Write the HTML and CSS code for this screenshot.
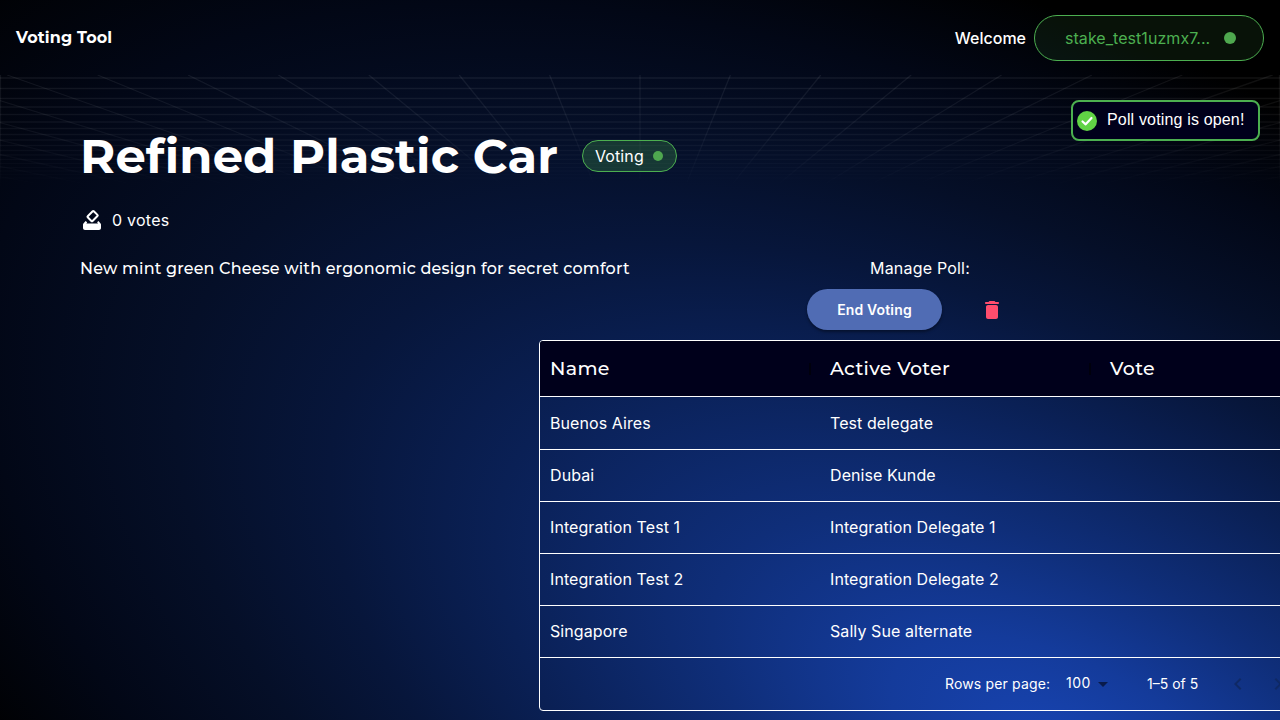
FILE: index.html
```html
<!DOCTYPE html>
<html lang="en">
<head>
<meta charset="utf-8">
<title>Voting Tool</title>
<link rel="stylesheet" href="styles.css">
</head>
<body>
<svg class="backdrop" viewBox="0 0 1280 720" aria-hidden="true">
  <defs>
    <radialGradient id="glow" gradientUnits="userSpaceOnUse" cx="0" cy="0" r="1" gradientTransform="translate(1070 760) rotate(28) scale(1400 680)">
      <stop offset="0" stop-color="#1845b4"/>
      <stop offset=".14" stop-color="#143b9b"/>
      <stop offset=".28" stop-color="#0f2e79"/>
      <stop offset=".45" stop-color="#0a2055"/>
      <stop offset=".58" stop-color="#07163b"/>
      <stop offset=".7" stop-color="#050f28"/>
      <stop offset=".85" stop-color="#020716"/>
      <stop offset="1" stop-color="#000"/>
    </radialGradient>
    <linearGradient id="fade" x1="0" y1="75" x2="0" y2="190" gradientUnits="userSpaceOnUse">
      <stop offset="0" stop-color="#fff"/><stop offset=".5" stop-color="#fff" stop-opacity=".7"/><stop offset="1" stop-color="#fff" stop-opacity="0"/>
    </linearGradient>
    <mask id="gridMask" maskUnits="userSpaceOnUse" x="0" y="75" width="1280" height="120"><rect y="75" width="1280" height="120" fill="url(#fade)"/></mask>
  </defs>
  <rect width="1280" height="720" fill="url(#glow)"/>
  <g id="grid" mask="url(#gridMask)" stroke="#fff" stroke-opacity=".07" stroke-width="1.3"></g>
</svg>
<header class="topbar">
  <div class="brand">Voting Tool</div>
  <div class="user"><span class="welcome">Welcome</span>
    <button class="wallet"><span>stake_test1uzmx7...</span><i class="dot"></i></button>
  </div>
</header>
<main class="page">
  <div class="heading"><h1>Refined Plastic Car</h1><span class="chip">Voting<i class="dot"></i></span></div>
  <div class="votes">
    <svg width="24" height="24" viewBox="0 0 24 24" fill="#fff"><rect x="8.300" y="4.700" width="8.600" height="6.800" rx=".8" transform="rotate(-45 12.600 8.100)" fill="none" stroke="#fff" stroke-width="2"/><path d="M5.600 13 3.600 15.200c-.4.400-.6.900-.6 1.400V20c0 1.100.9 2 2 2h14c1.100 0 2-.9 2-2v-3.400c0-.5-.2-1-.6-1.400l-2-2.200-1.300 1.300.9 1.200H6.400l.8-1.200z"/></svg>
    <span>0 votes</span>
  </div>
  <div class="columns">
    <p class="description">New mint green Cheese with ergonomic design for secret comfort</p>
    <section class="manage">
      <div class="manage-label">Manage Poll:</div>
      <div class="actions">
        <button class="end">End Voting</button>
        <svg width="24" height="24" viewBox="0 0 24 24" fill="#ff4d6d"><path d="M6 19c0 1.100.9 2 2 2h8c1.100 0 2-.9 2-2V9c0-1.100-.9-2-2-2H8c-1.100 0-2 .9-2 2v10zM18 4h-2.500l-.71-.71c-.18-.18-.44-.29-.7-.29H9.910c-.26 0-.52.11-.7.29L8.500 4H6c-.55 0-1 .45-1 1s.45 1 1 1h12c.55 0 1-.45 1-1s-.45-1-1-1z"/></svg>
      </div>
      <div class="table">
        <div class="row head"><div>Name<i class="sep"></i></div><div>Active Voter<i class="sep"></i></div><div>Vote</div></div>
        <div class="row first"><div>Buenos Aires</div><div>Test delegate</div></div>
        <div class="row"><div>Dubai</div><div>Denise Kunde</div></div>
        <div class="row"><div>Integration Test 1</div><div>Integration Delegate 1</div></div>
        <div class="row"><div>Integration Test 2</div><div>Integration Delegate 2</div></div>
        <div class="row"><div>Singapore</div><div>Sally Sue alternate</div></div>
        <div class="footer">
          <span class="rpp">Rows per page:</span><span class="size">100</span>
          <svg class="caret" width="24" height="24" viewBox="0 0 24 24"><path d="m7 10 5 5 5-5z"/></svg>
          <span class="range">1–5 of 5</span>
          <svg class="prev" width="24" height="24" viewBox="0 0 24 24"><path d="M15.410 16.590 10.830 12l4.580-4.590L14 6l-6 6 6 6z"/></svg>
          <svg class="next" width="24" height="24" viewBox="0 0 24 24"><path d="M8.590 16.590 13.170 12 8.590 7.410 10 6l6 6-6 6z"/></svg>
        </div>
      </div>
    </section>
  </div>
</main>
<div class="toast" role="status">
  <svg width="20" height="20" viewBox="0 0 20 20"><circle cx="10" cy="10" r="10" fill="#61d345"/><path d="M5.500 10.500 8.700 13.300 14.500 7" fill="none" stroke="#fff" stroke-width="2.200" stroke-linecap="round" stroke-linejoin="round"/></svg>
  <span>Poll voting is open!</span>
</div>
<script src="grid.js"></script>
</body>
</html>
```
FILE: grid.js
```js
const grid = document.getElementById('grid');
const line = (x1, y1, x2, y2) => {
  const el = document.createElementNS('http://www.w3.org/2000/svg', 'line');
  Object.entries({ x1, y1, x2, y2 }).forEach(([k, v]) => el.setAttribute(k, v));
  grid.append(el);
};
[78, 88.5, 98.500, 107, 114.500, 122, 128.500, 134.500, 140, 145.500, 150.500, 155, 159.500, 163.500, 167.500, 171, 174.500, 178].forEach(y => line(0, y, 1280, y));
/* Rays fan out on both sides of the centre line */
for (let i = -16; i <= 16; i++) line(640 + i * 90.4, 75, 640 + i * 45, 187);
line(0.500, 75, 0.500, 187);
line(1279.500, 75, 1279.500, 187);
```
FILE: styles.css
```css
* { box-sizing: border-box; }
body { margin: 0; width: 1280px; height: 720px; overflow: hidden; position: relative; background: #000; color: #fff; font: 400 16px/24px Inter, sans-serif; letter-spacing: .1px; }
button { font: inherit; color: inherit; margin: 0; }
.backdrop { position: absolute; inset: 0; width: 1280px; height: 720px; z-index: -1; }
.topbar { height: 76px; padding: 0 16px; display: flex; align-items: center; justify-content: space-between; }
.brand { font: 700 16px/24px Montserrat, Inter, sans-serif; letter-spacing: .12px; }
.user { display: flex; align-items: center; gap: 8px; }
.welcome { font-weight: 500; letter-spacing: 0; }
.wallet { width: 230px; height: 46px; border: 1px solid #4caf50; border-radius: 23px; background: rgba(76,175,80,.1); color: #4caf50; padding: 0 27px 0 30px; display: flex; align-items: center; justify-content: space-between; letter-spacing: .05px; }
.dot { width: 12px; height: 12px; border-radius: 50%; background: #4fa84f; }
.page { padding: 48px 80px 0; }
.heading { display: flex; align-items: center; height: 64px; gap: 24px; }
h1 { margin: 0; width: 478px; font: 700 48px/64px Montserrat, Inter, sans-serif; letter-spacing: .1px; white-space: nowrap; }
.chip { width: 95px; height: 32px; border: 1px solid #4caf50; border-radius: 16px; background: rgba(76,175,80,.25); padding: 0 13px 0 12px; display: flex; align-items: center; justify-content: space-between; }
.chip .dot { width: 10px; height: 10px; }
.votes { margin-top: 20px; display: flex; align-items: center; gap: 8px; height: 24px; letter-spacing: .25px; }
.columns { margin-top: 24px; display: grid; grid-template-columns: 560px 560px; }
.description { margin: 0; padding-top: 1px; font: 500 16px/24px Montserrat, Inter, sans-serif; letter-spacing: .16px; white-space: nowrap; }
.manage { display: flex; flex-direction: column; align-items: center; }
.manage-label { letter-spacing: .2px; }
.actions { width: 226px; height: 41px; margin-top: 9px; display: flex; align-items: center; gap: 38px; }
.end { width: 135px; height: 41px; border: 0; border-radius: 21px; background: #506cb4; font-weight: 600; font-size: 14px; letter-spacing: .15px; box-shadow: 0 2px 3px rgba(0,0,0,.4); }
.table { width: 762px; height: 371px; margin-top: 10px; border: 1px solid #fff; border-radius: 4px; overflow: hidden; flex: none; }
.row { height: 52px; padding-bottom: 2px; border-bottom: 1px solid #fff; display: grid; grid-template-columns: 280px 280px 200px; align-items: center; letter-spacing: .08px; }
.row > div { padding: 0 10px; display: flex; align-items: center; justify-content: space-between; }
.row.first { height: 53px; padding-bottom: 1px; }
.row.head { height: 56px; padding-bottom: 0; background: #00001b; font: 500 19px/28px Montserrat, Inter, sans-serif; letter-spacing: .3px; }
.sep { width: 2px; height: 12px; margin-right: -1px; background: #00000c; }
.footer { height: 52px; padding: 0 0 1px 405px; display: flex; align-items: center; font-size: 14px; white-space: nowrap; letter-spacing: .15px; }
.rpp { width: 121px; }
.size { width: 25px; margin-top: -2px; letter-spacing: .5px; }
.caret { fill: #091b4b; }
.range { margin-left: 32px; width: 52px; letter-spacing: 0; }
.prev { margin-left: 27px; }
.next { margin-left: 16px; }
.prev, .next { fill: #0f2965; flex: none; }
.toast { position: absolute; left: 1071px; top: 100px; width: 189px; height: 41px; border: 2px solid #4caf50; border-radius: 8px; background: #00001b; padding: 0 4px; display: flex; align-items: center; gap: 10px; font-family: "Liberation Sans", Arial, sans-serif; letter-spacing: .16px; white-space: nowrap; }
.toast span { margin-top: -1px; }
```
